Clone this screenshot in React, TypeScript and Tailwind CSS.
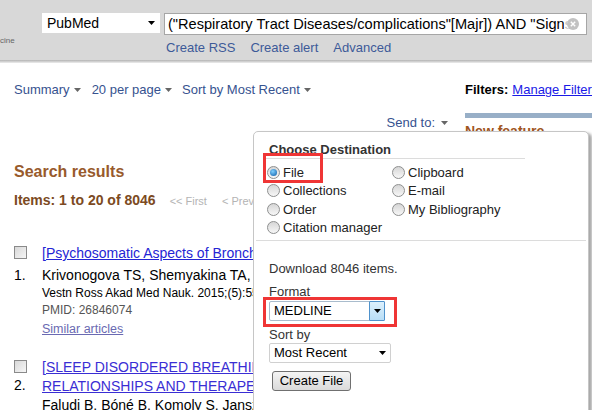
import React from "react";

const Tri = ({ color = "#000", w = 8, h = 4 }: { color?: string; w?: number; h?: number }) => (
  <svg width={w} height={h} viewBox={`0 0 ${w} ${h}`} className="block shrink-0">
    <path d={`M0 0H${w}L${w / 2} ${h}Z`} fill={color} />
  </svg>
);

const Radio = ({ checked }: { checked?: boolean }) => (
  <span className="inline-flex w-[13px] h-[13px] rounded-full border border-[#8e8f8f] bg-linear-to-b from-[#d6d6d6] to-[#f7f7f7] items-center justify-center shrink-0">
    {checked && (
      <span className="w-[7px] h-[7px] rounded-full bg-[radial-gradient(circle_at_40%_35%,#7fd0ff,#0b5aa6)]" />
    )}
  </span>
);

const Checkbox = ({ className }: { className: string }) => (
  <span
    className={`block w-[13px] h-[13px] border border-[#8a8a8a] bg-linear-to-br from-[#d8d8d8] to-[#f6f6f6] ${className}`}
  />
);

const RadioItem = ({ label, checked }: { label: string; checked?: boolean }) => (
  <div className="flex items-center h-[18.5px] gap-[3px] text-[13px] text-[#222] whitespace-nowrap">
    <Radio checked={checked} />
    <span>{label}</span>
  </div>
);

export default function App() {
  return (
    <div className="relative w-[592px] h-[410px] overflow-hidden bg-white font-['Liberation_Sans',Arial,sans-serif] text-black">
      {/* header */}
      <div className="h-[60px] bg-[#d8d8d8] flex">
        <div className="w-[42px] pt-[36px] text-[8px] leading-[10px] text-[#666]">cine</div>
        <div className="pt-[13px] flex flex-col">
          <div className="flex items-start">
            <div className="w-[118px] h-[20px] bg-white flex items-center justify-between pl-[5px] pr-[5px] text-[14px] leading-[16px]">
              <span>PubMed</span>
              <Tri w={7} h={4} />
            </div>
            <div className="ml-[4px] relative w-[423px] h-[22px] border border-[#a6a6a6] bg-white flex items-center pl-[3px] overflow-hidden">
              <span className="whitespace-nowrap text-[14.6px] leading-[18px]">
                ("Respiratory Tract Diseases/complications"[Majr]) AND "Signs and Symptoms, Respiratory"[Majr]
              </span>
              <span className="absolute right-0 top-0 bottom-0 w-[22px] bg-linear-to-r from-[rgba(255,255,255,0.6)] to-white to-[30%]" />
              <span className="absolute right-[7px] top-[4px] w-[12px] h-[12px] rounded-full bg-[#c2c2c2] flex items-center justify-center">
                <svg width="6" height="6" viewBox="0 0 6 6">
                  <path d="M0.8 0.8L5.2 5.2M5.2 0.8L0.8 5.2" stroke="#fff" strokeWidth="1.4" />
                </svg>
              </span>
            </div>
          </div>
          <div className="flex gap-[15px] ml-[124px] mt-[5px] text-[13px] leading-[16px] text-[#3d5a98]">
            <span>Create RSS</span>
            <span>Create alert</span>
            <span>Advanced</span>
          </div>
        </div>
      </div>
      <div className="h-[3px] bg-linear-to-b from-[#b3b3b3] to-[#eeeeee]" />

      {/* main */}
      <div className="flex">
        <div className="w-[465px] shrink-0 overflow-hidden pl-[14px]">
          <div className="mt-[19px] h-[16px] flex items-center text-[13px] leading-[16px] text-[#36528f] whitespace-nowrap">
            <span>Summary</span>
            <span className="ml-[4px]"><Tri color="#666" w={7} h={4} /></span>
            <span className="ml-[11px]">20 per page</span>
            <span className="ml-[4px]"><Tri color="#666" w={7} h={4} /></span>
            <span className="ml-[10px]">Sort by Most Recent</span>
            <span className="ml-[4px]"><Tri color="#666" w={7} h={4} /></span>
          </div>
          <div className="mt-[17px] h-[16px] flex justify-end items-center pr-[17px] text-[13px] leading-[16px] text-[#36528f]">
            <span>Send to:</span>
            <span className="ml-[6px]"><Tri color="#666" w={7} h={4} /></span>
          </div>
          <div className="mt-[31px] text-[16px] leading-[20px] font-bold text-[#985a2c]">Search results</div>
          <div className="mt-[9px] h-[18px] flex items-baseline whitespace-nowrap">
            <span className="text-[14px] leading-[18px] font-bold text-[#7c4a22]">Items: 1 to 20 of 8046</span>
            <span className="ml-[14px] text-[11px] text-[#b4b4b4]">&lt;&lt; First</span>
            <span className="ml-[15px] text-[11px] text-[#b4b4b4]">&lt; Prev</span>
          </div>

          {/* result 1 */}
          <div className="mt-[35px] flex">
            <div className="w-[28px] shrink-0 flex flex-col">
              <Checkbox className="mt-[2px]" />
              <div className="mt-[7px] text-[14px] leading-[19px]">1.</div>
            </div>
            <div className="flex flex-col whitespace-nowrap">
              <span className="text-[14px] leading-[19px] underline text-[#2424d4]">
                [Psychosomatic Aspects of Bronchial Asthma].
              </span>
              <span className="mt-[3px] text-[14px] leading-[19px]">
                Krivonogova TS, Shemyakina TA, Ivanova OV, Kuzmenko LG.
              </span>
              <span className="text-[12px] leading-[17px]">Vestn Ross Akad Med Nauk. 2015;(5):556-61.</span>
              <span className="text-[12px] leading-[17px] text-[#555]">PMID: 26846074</span>
              <span className="mt-[1px] text-[12.5px] leading-[18px] underline text-[#6a6ab2]">Similar articles</span>
            </div>
          </div>

          {/* result 2 */}
          <div className="mt-[20px] flex">
            <div className="w-[28px] shrink-0 flex flex-col">
              <Checkbox className="mt-[2px]" />
              <div className="mt-[3px] text-[14px] leading-[19px]">2.</div>
            </div>
            <div className="flex flex-col whitespace-nowrap">
              <span className="text-[14px] leading-[19px] underline text-[#3a2ed4]">
                [SLEEP DISORDERED BREATHING IN NEUROLOGICAL DISEASES: CLINICAL
                <br />
                RELATIONSHIPS AND THERAPEUTIC OPTIONS].
              </span>
              <span className="text-[14px] leading-[19px]">Faludi B, Bóné B, Komoly S, Janszky J.</span>
            </div>
          </div>
        </div>

        <div className="flex-1 flex flex-col whitespace-nowrap overflow-hidden">
          <div className="mt-[19px] h-[16px] flex items-center text-[13px] leading-[16px]">
            <span className="font-bold">Filters:</span>
            <span className="ml-[4px] underline text-[#1a1ae6]">Manage Filters</span>
          </div>
          <div className="mt-[15px] h-[5px] bg-[#98afc7]" />
          <div className="mt-[4px] text-[14px] leading-[18px] font-bold text-[#a0561f]">New feature</div>
        </div>
      </div>

      {/* Send-to popup */}
      <div className="absolute left-[253px] top-[131px] w-[336px] h-[300px] bg-white border border-[#c6c6c6] rounded-[5px] shadow-[3px_2px_3px_rgba(0,0,0,0.35)]">
        <div className="ml-[9px] mt-[10px] w-[262px] pl-[6px] border-b border-[#dcdcdc] text-[13px] leading-[16px] font-bold text-[#333]">
          Choose Destination
        </div>
        <div className="mt-[4px] pl-[13px] grid grid-cols-[125px_1fr]">
          <RadioItem label="File" checked />
          <RadioItem label="Clipboard" />
          <RadioItem label="Collections" />
          <RadioItem label="E-mail" />
          <RadioItem label="Order" />
          <RadioItem label="My Bibliography" />
          <RadioItem label="Citation manager" />
        </div>
        <div className="mt-[3px] mx-[2px] border-t border-[#dcdcdc]" />
        <div className="pl-[15px] flex flex-col items-start text-[13px] leading-[16px] text-[#333]">
          <div className="mt-[20px]">Download 8046 items.</div>
          <div className="mt-[7px]">Format</div>
          <div className="mt-[1px] w-[116px] h-[20px] border border-[#a9bccd] rounded-[2px] flex items-stretch bg-white">
            <span className="flex-1 pl-[4px] flex items-center text-[13px] text-black">MEDLINE</span>
            <span className="w-[16px] border border-[#4f92cc] rounded-[1px] bg-linear-to-b from-[#dcf0fc] to-[#b9def6] flex items-center justify-center -m-[1px]">
              <Tri w={7} h={4} />
            </span>
          </div>
          <div className="mt-[6px]">Sort by</div>
          <div className="w-[122px] h-[20px] border border-[#d0d0d0] rounded-[2px] flex items-center justify-between pl-[4px] pr-[4px] bg-white text-black">
            <span>Most Recent</span>
            <Tri w={7} h={4} />
          </div>
          <button className="mt-[8px] ml-[3px] w-[79px] h-[20px] border border-[#707070] rounded-[3px] bg-linear-to-b from-[#f4f4f4] to-[#dadada] text-[13px] leading-[16px] text-black">
            Create File
          </button>
        </div>

        {/* annotation boxes */}
        <div className="absolute left-[9px] top-[21px] w-[60px] h-[30px] border-[3px] border-[#ef3535]" />
        <div className="absolute left-[9px] top-[165px] w-[134px] h-[30px] border-[3px] border-[#ef3535]" />
      </div>
    </div>
  );
}
